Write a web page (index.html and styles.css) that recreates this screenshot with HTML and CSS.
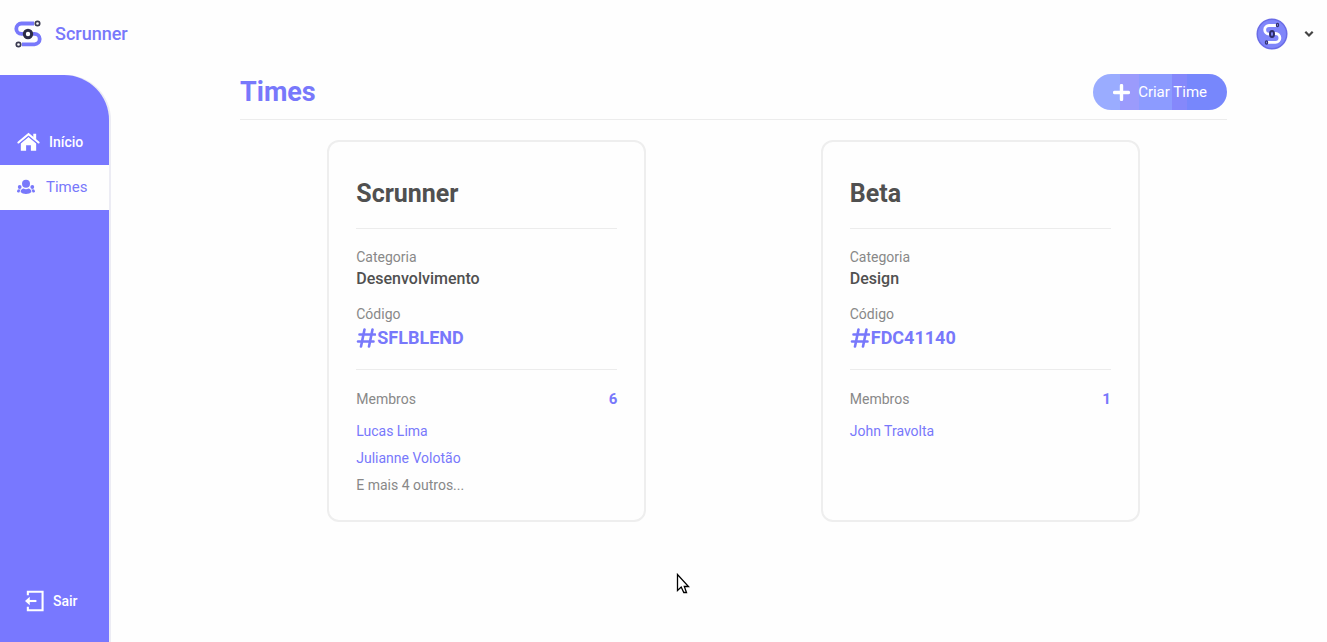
FILE: index.html
```
<!DOCTYPE html>
<html lang="pt-BR">
<head>
<meta charset="utf-8">
<title>Scrunner</title>
<meta name="viewport" content="width=device-width, initial-scale=1">
<link rel="stylesheet" href="styles.css">
</head>
<body>
<svg class="defs" width="0" height="0" aria-hidden="true">
  <symbol id="hash" viewBox="0 0 20 22"><path d="M8.500 2.500 5 19.500M16.500 2.500 13 19.500M3.500 7.500H19M2 14.500H17.500" fill="none" stroke="currentColor" stroke-width="2.600" stroke-linecap="round"/></symbol>
</svg>
<header class="topbar">
  <a class="brand" href="#">
    <svg class="brand-logo" viewBox="0 0 28 28" aria-hidden="true">
      <path d="M20 3.500H7.500a5.200 5.200 0 0 0 0 10.400H9M19 13.900h1.500a5.200 5.200 0 0 1 0 10.400H8" fill="none" stroke="#7878fb" stroke-width="3.800"/>
      <circle cx="14" cy="14" r="3.700" fill="#fff" stroke="#2c2c48" stroke-width="3"/>
      <circle cx="23.500" cy="3.500" r="2.200" fill="#fff" stroke="#3a3a50" stroke-width="1.700"/>
      <circle cx="4.500" cy="24.500" r="2.200" fill="#fff" stroke="#3a3a50" stroke-width="1.700"/>
    </svg>
    <span>Scrunner</span>
  </a>
  <button class="account" type="button" aria-label="Conta">
    <svg class="avatar" viewBox="0 0 32 32" aria-hidden="true">
      <circle cx="16" cy="16" r="15.500" fill="#6a6ce6"/>
      <circle cx="16" cy="16" r="14" fill="#8086fa"/>
      <path d="M20 7.500h-7a4.300 4.300 0 0 0 0 8.600h1M18 15.500h1.500a4.300 4.300 0 0 1 0 8.800H12" fill="none" stroke="#fff" stroke-width="2.800"/>
      <ellipse cx="16" cy="16" rx="2" ry="2.900" fill="#8086fa" stroke="#2c2c68" stroke-width="2"/>
      <ellipse cx="21.500" cy="7" rx="1.100" ry="1.700" fill="#8086fa" stroke="#33336e" stroke-width="1.200"/>
      <ellipse cx="10.500" cy="24.500" rx="1.100" ry="1.700" fill="#8086fa" stroke="#33336e" stroke-width="1.200"/>
    </svg>
    <svg class="chevron" viewBox="0 0 10 8" aria-hidden="true"><path d="m1.300 1.800 3.700 3.700 3.700-3.700" fill="none" stroke="#444" stroke-width="2.200"/></svg>
  </button>
</header>
<div class="layout">
  <nav class="sidebar">
    <a class="nav-link" href="#">
      <svg class="icon-home" viewBox="0 0 24 20" aria-hidden="true">
        <path d="M1.500 10.500 12 1.800l10.500 8.700" fill="none" stroke="#fff" stroke-width="2.200" stroke-linecap="round"/>
        <path d="M17 1.500h3v6l-3-2.500zM4 11.500l8-6.600 8 6.600V19h-5.500v-5.500h-5V19H4z" fill="#fff"/>
        <path d="M3 11.500 12 4.100l9 7.400" fill="none" stroke="#7878ff" stroke-width=".8"/>
      </svg>
      <span>Início</span>
    </a>
    <a class="nav-link nav-link-active" href="#" aria-current="page">
      <svg class="icon-team" viewBox="0 0 18 16" aria-hidden="true" fill="currentColor">
        <circle cx="9" cy="4.800" r="4"/><circle cx="2.700" cy="8" r="1.900"/><circle cx="15.300" cy="8" r="1.900"/>
        <path d="M3.600 13c0-2.200 1.500-3.500 3-3.500 1.500.9 3.300.9 4.800 0 1.500 0 3 1.300 3 3.500-2 2.500-8.800 2.500-10.800 0zM0 12.700c0-1.700 1-2.500 1.800-2.500.8.400 1.400.4 2 0-.8.900-1.100 1.800-1.100 3.100-1 .2-2.700 0-2.700-.6zM18 12.700c0-1.700-1-2.500-1.800-2.500-.8.400-1.400.4-2 0 .8.900 1.100 1.800 1.100 3.100 1 .2 2.700 0 2.700-.6z"/>
      </svg>
      <span>Times</span>
    </a>
    <a class="nav-link nav-link-exit" href="#">
      <svg class="icon-exit" viewBox="0 0 20 22" aria-hidden="true">
        <path d="M3 5V1.200h15.500v19.600H3V17" fill="none" stroke="#fff" stroke-width="2.200"/>
        <path d="M3 11h9" stroke="#fff" stroke-width="2.200"/><path d="M0 11l5-4.500v9z" fill="#fff"/>
      </svg>
      <span>Sair</span>
    </a>
  </nav>
  <main class="content">
    <div class="page-head">
      <h1>Times</h1>
      <button class="create" type="button">
        <svg viewBox="0 0 16 16" aria-hidden="true"><path d="M8 1.500v13M1.500 8h13" stroke="#fff" stroke-width="3.200" stroke-linecap="round"/></svg>
        <span>Criar Time</span>
      </button>
    </div>
    <div class="cards">
      <article class="card">
        <h2>Scrunner</h2>
        <dl class="info">
          <dt>Categoria</dt><dd>Desenvolvimento</dd>
          <dt>Código</dt><dd class="code"><svg aria-hidden="true"><use href="#hash"/></svg>SFLBLEND</dd>
        </dl>
        <div class="members-head"><span>Membros</span><strong>6</strong></div>
        <ul class="members"><li>Lucas Lima</li><li>Julianne Volotão</li><li class="more">E mais 4 outros...</li></ul>
      </article>
      <article class="card">
        <h2>Beta</h2>
        <dl class="info">
          <dt>Categoria</dt><dd>Design</dd>
          <dt>Código</dt><dd class="code"><svg aria-hidden="true"><use href="#hash"/></svg>FDC41140</dd>
        </dl>
        <div class="members-head"><span>Membros</span><strong>1</strong></div>
        <ul class="members"><li>John Travolta</li></ul>
      </article>
    </div>
  </main>
</div>
<svg class="pointer" viewBox="0 0 14 22" aria-hidden="true"><path d="M1.500 1.500v16l3.700-3.500 2.600 5.500h2.700L8.300 13.500h4.200z" fill="#fff" stroke="#000" stroke-width="1.300"/></svg>
</body>
</html>
```
FILE: styles.css
```
* { box-sizing: border-box; }
body {
  margin: 0;
  min-height: 100vh;
  display: flex;
  flex-direction: column;
  background: #fefefe;
  color: #505050;
  font: 14px/20px Roboto, sans-serif;
}
h1, h2, dl, dd, ul { margin: 0; padding: 0; }
a { color: inherit; text-decoration: none; }
button { border: 0; font: inherit; cursor: pointer; }
.defs { position: absolute; }

.topbar {
  display: flex;
  align-items: center;
  justify-content: space-between;
  height: 67px;
  padding: 0 13px 0 14px;
}
.brand {
  display: flex;
  align-items: center;
  gap: 13px;
  color: #7878fb;
  font-size: 18px;
  font-weight: 500;
}
.brand-logo { width: 28px; height: 28px; }
.account {
  display: flex;
  align-items: center;
  gap: 16px;
  padding: 0;
  background: none;
}
.avatar { width: 32px; height: 32px; }
.chevron { width: 10px; height: 8px; }

.layout { flex: 1; display: flex; }
.sidebar {
  width: 109px;
  flex: none;
  display: flex;
  flex-direction: column;
  margin-top: 8px;
  padding: 45px 0 18px;
  border-top-right-radius: 45px;
  background: #7878ff;
  box-shadow: 2px 0 #ececf4;
}
.nav-link {
  display: flex;
  align-items: center;
  height: 45px;
  gap: 9px;
  padding: 0 0 2px 17px;
  color: #fff;
  font-weight: 500;
}
.nav-link-active {
  gap: 11px;
  background: #fefefe;
  color: #7878fb;
  font-size: 15px;
  font-weight: 400;
}
.nav-link-exit { margin-top: auto; padding-left: 25px; }
.icon-home { width: 23px; height: 20px; }
.icon-team { width: 18px; height: 16px; }
.icon-exit { width: 19px; height: 22px; }

.content { flex: 1; padding: 7px 100px 40px 131px; }
.page-head {
  display: flex;
  align-items: center;
  justify-content: space-between;
  padding-bottom: 9px;
  border-bottom: 1px solid #ececec;
}
h1 { color: #7878fb; font-size: 27px; line-height: 36px; font-weight: 700; }
.create {
  display: flex;
  align-items: center;
  gap: 8px;
  height: 36px;
  padding: 0 20px;
  border-radius: 18px;
  background: linear-gradient(90deg, #9aacff 0 20%, #9b9bfc 20% 34%, #8c9bff 34% 59%, #8588fb 59% 70%, #7787fc 70%);
  color: #fff;
  font-size: 15px;
}
.create svg { width: 17px; height: 17px; }

.cards {
  display: grid;
  grid-template-columns: repeat(2, 1fr);
  justify-items: center;
  padding-top: 20px;
}
.card {
  width: 319px;
  padding: 36px 27px 21px;
  border: 2px solid #eee;
  border-radius: 12px;
}
h2 {
  padding-bottom: 18px;
  border-bottom: 1px solid #ececec;
  font-size: 25px;
  line-height: 32px;
  font-weight: 700;
}
.info { padding: 18px 0; border-bottom: 1px solid #ececec; }
dt { color: #888; }
dd { font-size: 16px; line-height: 24px; font-weight: 500; }
dd + dt { margin-top: 13px; }
dd.code {
  display: flex;
  align-items: center;
  gap: 1px;
  color: #7878fb;
  font-size: 18px;
  line-height: 27px;
  font-weight: 700;
}
.code svg { width: 20px; height: 22px; }
.members-head {
  display: flex;
  justify-content: space-between;
  padding: 19px 0 9px;
  color: #888;
}
.members-head strong { color: #7878fb; font-size: 15px; }
.members { list-style: none; color: #7878fb; line-height: 27px; }
.members .more { color: #888; }

.pointer {
  position: absolute;
  left: 676px;
  top: 573px;
  width: 14px;
  height: 22px;
  pointer-events: none;
}
```
